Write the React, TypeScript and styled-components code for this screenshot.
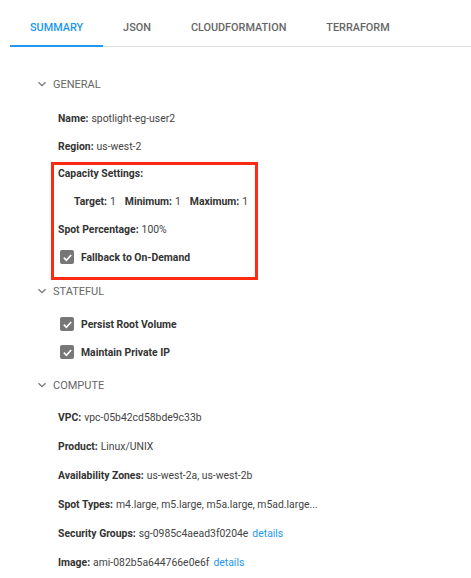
import React from "react";
import styled, { createGlobalStyle } from "styled-components";

const Global = createGlobalStyle`
  html, body { margin: 0; padding: 0; background: #fff; }
  body { font-family: Roboto, "Noto Sans", sans-serif; color: #333; }
  * { box-sizing: border-box; }
`;

const Page = styled.div`
  width: 471px;
  padding-top: 9px;
`;

const TabBar = styled.div`
  display: flex;
  margin-left: 10px;
  border-bottom: 1px solid #dcdcdc;
`;

const Tab = styled.div<{ $active?: boolean }>`
  height: 38px;
  padding: 0 20px;
  display: flex;
  align-items: center;
  font-size: 10.85px;
  font-weight: 500;
  text-transform: uppercase;
  color: ${(p) => (p.$active ? "#2196f3" : "#666")};
  border-bottom: 2px solid ${(p) => (p.$active ? "#2196f3" : "transparent")};
  margin-bottom: -1px;
`;

const Content = styled.div`
  padding: 26px 0 0 37px;
  display: flex;
  flex-direction: column;
`;

const SectionHeader = styled.div`
  display: flex;
  align-items: center;
  gap: 6px;
  height: 22px;
  font-size: 11px;
  color: #666;
`;

const Chevron = () => (
  <svg width="10" height="10" viewBox="0 0 10 10">
    <path d="M1.5 3.2 L5 6.7 L8.5 3.2" fill="none" stroke="#777" strokeWidth="1.3" />
  </svg>
);

const Body = styled.div<{ $top: number; $bottom?: number }>`
  display: flex;
  flex-direction: column;
  padding: ${(p) => p.$top}px 0 ${(p) => p.$bottom ?? 0}px 21px;
`;

const Row = styled.div<{ $indent?: number; $h?: number }>`
  height: ${(p) => p.$h ?? 28}px;
  flex-shrink: 0;
  display: flex;
  align-items: center;
  font-size: 10.4px;
  color: #444;
  padding-left: ${(p) => p.$indent ?? 0}px;
  white-space: nowrap;
`;

const Label = styled.b`
  font-weight: 700;
  color: #333;
  margin-right: 3px;
`;

const Pair = styled.span`
  margin-right: 9px;
`;

const Link = styled.span`
  color: #2196f3;
  margin-left: 4px;
`;

const Highlight = styled.div`
  margin: 2px 0 0 -7px;
  width: 207px;
  border: 3px solid #ff2a12;
  padding: 0 0 6px 4px;
  display: flex;
  flex-direction: column;
  & > :first-child { margin-top: -6px; }
`;

const Box = styled.span`
  width: 14px;
  height: 14px;
  border-radius: 2px;
  background: #777;
  display: inline-flex;
  align-items: center;
  justify-content: center;
  margin: 0 7px 0 2px;
`;

const CheckRow = styled(Row)`
  font-weight: 700;
  color: #333;
`;

const Check = ({ children }: { children: React.ReactNode }) => (
  <CheckRow>
    <Box>
      <svg width="11" height="11" viewBox="0 0 12 12">
        <path d="M2 6.2 L4.8 9 L10 3.2" fill="none" stroke="#fff" strokeWidth="1.8" />
      </svg>
    </Box>
    {children}
  </CheckRow>
);

export default function App() {
  return (
    <Page>
      <Global />
      <TabBar>
        <Tab $active>Summary</Tab>
        <Tab>JSON</Tab>
        <Tab>CloudFormation</Tab>
        <Tab>Terraform</Tab>
      </TabBar>
      <Content>
        <SectionHeader>
          <Chevron />
          GENERAL
        </SectionHeader>
        <Body $top={9}>
          <Row><Label>Name:</Label>spotlight-eg-user2</Row>
          <Row><Label>Region:</Label>us-west-2</Row>
          <Highlight>
            <Row><Label>Capacity Settings:</Label></Row>
            <Row $indent={16}>
              <Pair><Label>Target:</Label>1</Pair>
              <Pair><Label>Minimum:</Label>1</Pair>
              <Pair><Label>Maximum:</Label>1</Pair>
            </Row>
            <Row><Label>Spot Percentage:</Label>100%</Row>
            <Check>Fallback to On-Demand</Check>
          </Highlight>
        </Body>
        <SectionHeader>
          <Chevron />
          STATEFUL
        </SectionHeader>
        <Body $top={8} $bottom={8}>
          <Check>Persist Root Volume</Check>
          <Check>Maintain Private IP</Check>
        </Body>
        <SectionHeader>
          <Chevron />
          COMPUTE
        </SectionHeader>
        <Body $top={7}>
          <Row $h={29}><Label>VPC:</Label>vpc-05b42cd58bde9c33b</Row>
          <Row $h={29}><Label>Product:</Label>Linux/UNIX</Row>
          <Row $h={29}><Label>Availability Zones:</Label>us-west-2a, us-west-2b</Row>
          <Row $h={29}><Label>Spot Types:</Label>m4.large, m5.large, m5a.large, m5ad.large...</Row>
          <Row $h={29}><Label>Security Groups:</Label>sg-0985c4aead3f0204e<Link>details</Link></Row>
          <Row $h={29}><Label>Image:</Label>ami-082b5a644766e0e6f<Link>details</Link></Row>
        </Body>
      </Content>
    </Page>
  );
}
